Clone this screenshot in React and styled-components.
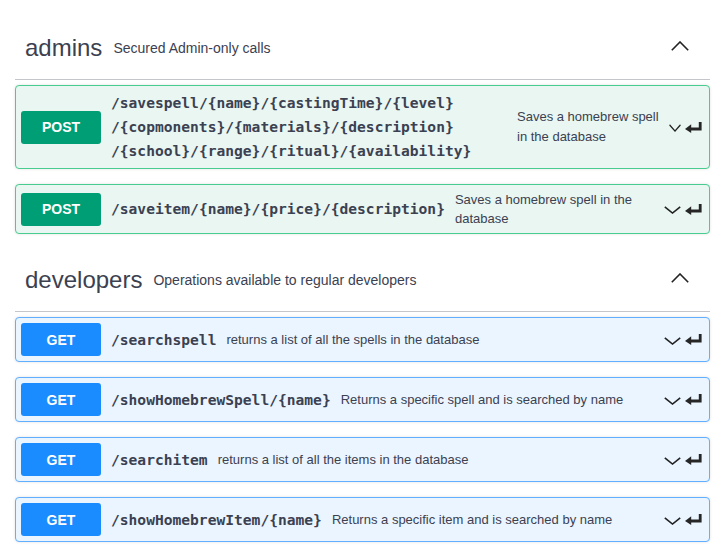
import React from 'react'
import styled, { createGlobalStyle } from 'styled-components'

const GlobalStyle = createGlobalStyle`
  html, body {
    margin: 0;
    padding: 0;
    background: #fff;
  }
  body {
    font-family: "Liberation Sans", Arial, sans-serif;
    color: #3b4151;
  }
`

const methods = {
  post: { button: '#009e74', border: '#49cc90', bg: '#e9f6f2' },
  get: { button: '#1a8cff', border: '#61affe', bg: '#ebf5ff' },
}

const Page = styled.div`
  padding: 17px 9px 0 15px;
`

const TagSection = styled.section``

const TagHeader = styled.div`
  display: flex;
  align-items: center;
  height: 42px;
  padding: 10px 21px 10px 10px;
  margin-bottom: 5px;
  border-bottom: 1px solid rgba(59, 65, 81, 0.3);
`

const TagName = styled.h3`
  margin: 0;
  font-size: 24px;
  font-weight: normal;
  color: #3b4151;
`

const TagDescription = styled.small`
  flex: 1;
  padding: 0 11px;
  font-size: 14px;
  color: #3b4151;
`

const Opblock = styled.div`
  margin-bottom: 15px;
  border: 1px solid ${props => methods[props.method].border};
  border-radius: 4px;
  background: ${props => methods[props.method].bg};
  box-shadow: 0 0 3px rgba(0, 0, 0, 0.12);
`

const Summary = styled.div`
  display: flex;
  align-items: center;
  padding: 5px;
`

const MethodBadge = styled.span`
  flex-shrink: 0;
  width: 80px;
  height: 33px;
  display: flex;
  align-items: center;
  justify-content: center;
  border-radius: 3px;
  background: ${props => methods[props.method].button};
  color: #fff;
  font-size: 14px;
  font-weight: bold;
  text-transform: uppercase;
`

const Path = styled.span`
  flex-shrink: 0;
  max-width: 396px;
  margin-left: 10px;
  font-family: "DejaVu Sans Mono", "Liberation Mono", monospace;
  font-size: 14.6px;
  font-weight: bold;
  line-height: 24px;
  color: #3b4151;
`

const Description = styled.div`
  flex: 1 1 auto;
  min-width: 0;
  margin-left: 10px;
  font-size: 13px;
  line-height: ${props => (props.tall ? '20px' : '19px')};
  color: #3b4151;
`

const Controls = styled.div`
  flex-shrink: 0;
  display: flex;
  align-items: center;
  gap: 4px;
  margin-left: 10px;
  margin-right: 2px;
`

const Chevron = styled.svg`
  width: ${props => (props.compact ? '12px' : '17px')};
  height: 8px;
  margin-top: 2px;
`

const ReturnArrow = styled.svg`
  width: 17px;
  height: 11px;
`

const UpChevron = styled.svg`
  width: 18px;
  height: 10px;
  margin-top: -4px;
`

const ChevronDown = ({ compact }) => (
  <Chevron compact={compact} viewBox="0 0 17 8" preserveAspectRatio="none">
    <polyline points="0.8,0.8 8.5,7 16.2,0.8" fill="none" stroke="#222" strokeWidth="1.6" />
  </Chevron>
)

const Enter = () => (
  <ReturnArrow viewBox="0 0 17 11">
    <path d="M15.2 0 V7 H5" fill="none" stroke="#262626" strokeWidth="2.8" />
    <path d="M0 7 L6.2 2.2 L6.2 11 Z" fill="#262626" />
  </ReturnArrow>
)

const ChevronUp = () => (
  <UpChevron viewBox="0 0 18 10">
    <polyline points="0.8,9.2 9,1 17.2,9.2" fill="none" stroke="#222" strokeWidth="1.6" />
  </UpChevron>
)

const renderPath = path =>
  path.split('/').filter(Boolean).map((part, i) => (
    <React.Fragment key={i}>
      {i > 0 && <wbr />}/{part}
    </React.Fragment>
  ))

const tags = [
  {
    name: 'admins',
    description: 'Secured Admin-only calls',
    ops: [
      {
        method: 'post',
        path: '/savespell/{name}/{castingTime}/{level}/{copmonents}/{materials}/{description}/{school}/{range}/{ritual}/{availability}',
        summary: 'Saves a homebrew spell in the database',
        tall: true,
      },
      {
        method: 'post',
        path: '/saveitem/{name}/{price}/{description}',
        summary: 'Saves a homebrew spell in the database',
      },
    ],
  },
  {
    name: 'developers',
    description: 'Operations available to regular developers',
    ops: [
      { method: 'get', path: '/searchspell', summary: 'returns a list of all the spells in the database' },
      { method: 'get', path: '/showHomebrewSpell/{name}', summary: 'Returns a specific spell and is searched by name' },
      { method: 'get', path: '/searchitem', summary: 'returns a list of all the items in the database' },
      { method: 'get', path: '/showHomebrewItem/{name}', summary: 'Returns a specific item and is searched by name' },
    ],
  },
]

const App = () => (
  <Page>
    <GlobalStyle />
    {tags.map(tag => (
      <TagSection key={tag.name}>
        <TagHeader>
          <TagName>{tag.name}</TagName>
          <TagDescription>{tag.description}</TagDescription>
          <ChevronUp />
        </TagHeader>
        {tag.ops.map((op, i) => (
          <Opblock method={op.method} key={i}>
            <Summary>
              <MethodBadge method={op.method}>{op.method}</MethodBadge>
              <Path>{renderPath(op.path)}</Path>
              <Description tall={op.tall}>{op.summary}</Description>
              <Controls>
                <ChevronDown compact={op.tall} />
                <Enter />
              </Controls>
            </Summary>
          </Opblock>
        ))}
      </TagSection>
    ))}
  </Page>
)

export default App
